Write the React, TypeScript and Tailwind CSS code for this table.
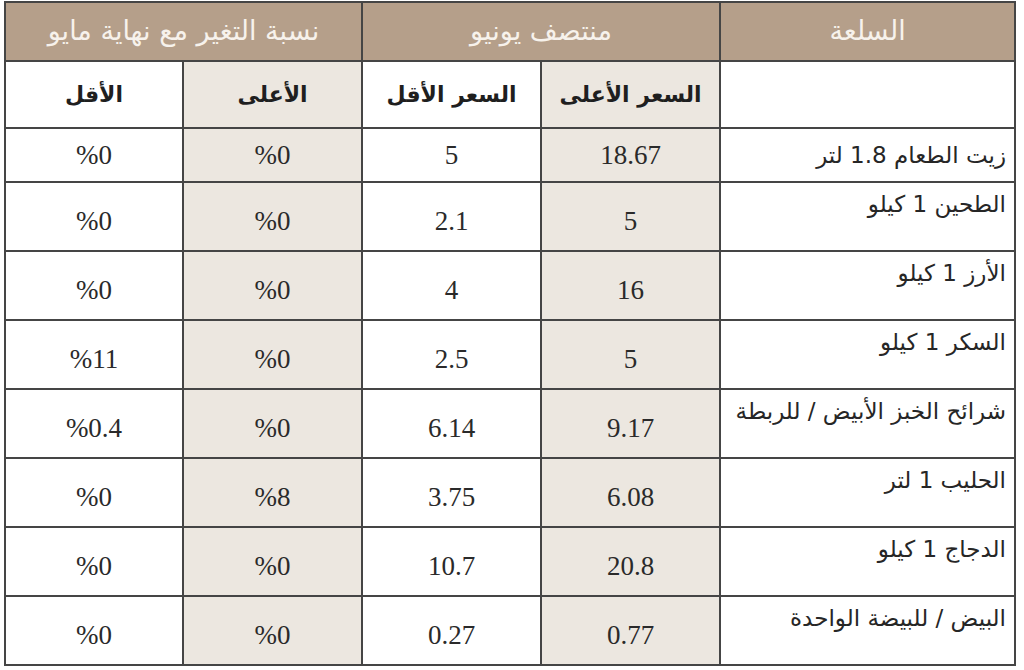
const rows = [
  { name: "زيت الطعام 1.8 لتر", high: "18.67", low: "5", chHigh: "%0", chLow: "%0" },
  { name: "الطحين 1 كيلو", high: "5", low: "2.1", chHigh: "%0", chLow: "%0" },
  { name: "الأرز 1 كيلو", high: "16", low: "4", chHigh: "%0", chLow: "%0" },
  { name: "السكر 1 كيلو", high: "5", low: "2.5", chHigh: "%0", chLow: "%11" },
  { name: "شرائح الخبز الأبيض / للربطة", high: "9.17", low: "6.14", chHigh: "%0", chLow: "%0.4" },
  { name: "الحليب 1 لتر", high: "6.08", low: "3.75", chHigh: "%8", chLow: "%0" },
  { name: "الدجاج 1 كيلو", high: "20.8", low: "10.7", chHigh: "%0", chLow: "%0" },
  { name: "البيض / للبيضة الواحدة", high: "0.77", low: "0.27", chHigh: "%0", chLow: "%0" },
];

const arabic = "font-['DejaVu_Sans',sans-serif]";
const serif = "font-['Liberation_Serif',serif]";

function NumCell({ value, shaded, first }: { value: string; shaded?: boolean; first?: boolean }) {
  return (
    <div
      className={`flex items-center justify-center ${first ? "" : "pt-[10px]"} ${shaded ? "bg-[#ece7e0]" : "bg-white"}`}
    >
      <span dir="ltr" className={`${serif} text-[27px] leading-none text-[#2a2a2a]`}>
        {value}
      </span>
    </div>
  );
}

export default function App() {
  return (
    <div className="w-[1024px] h-[670px] bg-white pt-[1px] pl-[4px]">
      <div
        dir="rtl"
        className="w-[1012px] grid grid-cols-[293px_177px_177px_177px_176px] grid-rows-[57px_65px_52px_repeat(7,67px)] gap-[2px] p-[2px] bg-[#454545]"
      >
        <div className={`bg-[#b59f8a] flex items-center justify-center text-[27px] text-[#f7f2ec] ${arabic}`}>السلعة</div>
        <div className={`col-span-2 bg-[#b59f8a] flex items-center justify-center text-[27px] text-[#f7f2ec] ${arabic}`}>منتصف يونيو</div>
        <div className={`col-span-2 bg-[#b59f8a] flex items-center justify-center text-[27px] text-[#f7f2ec] ${arabic}`}>نسبة التغير مع نهاية مايو</div>

        <div className="bg-white" />
        <div className={`bg-[#ece7e0] flex items-center justify-center text-[22px] font-bold text-[#1f1f1f] ${arabic}`}>السعر الأعلى</div>
        <div className={`bg-white flex items-center justify-center text-[22px] font-bold text-[#1f1f1f] ${arabic}`}>السعر الأقل</div>
        <div className={`bg-[#ece7e0] flex items-center justify-center text-[22px] font-bold text-[#1f1f1f] ${arabic}`}>الأعلى</div>
        <div className={`bg-white flex items-center justify-center text-[22px] font-bold text-[#1f1f1f] ${arabic}`}>الأقل</div>

        {rows.map((r, i) => (
          <>
            <div
              key={r.name}
              className={`bg-white flex pr-[8px] text-[23px] text-[#262626] ${arabic} ${i === 0 ? "items-center" : "items-start pt-[4px]"}`}
            >
              {r.name}
            </div>
            <NumCell value={r.high} shaded first={i === 0} />
            <NumCell value={r.low} first={i === 0} />
            <NumCell value={r.chHigh} shaded first={i === 0} />
            <NumCell value={r.chLow} first={i === 0} />
          </>
        ))}
      </div>
    </div>
  );
}
